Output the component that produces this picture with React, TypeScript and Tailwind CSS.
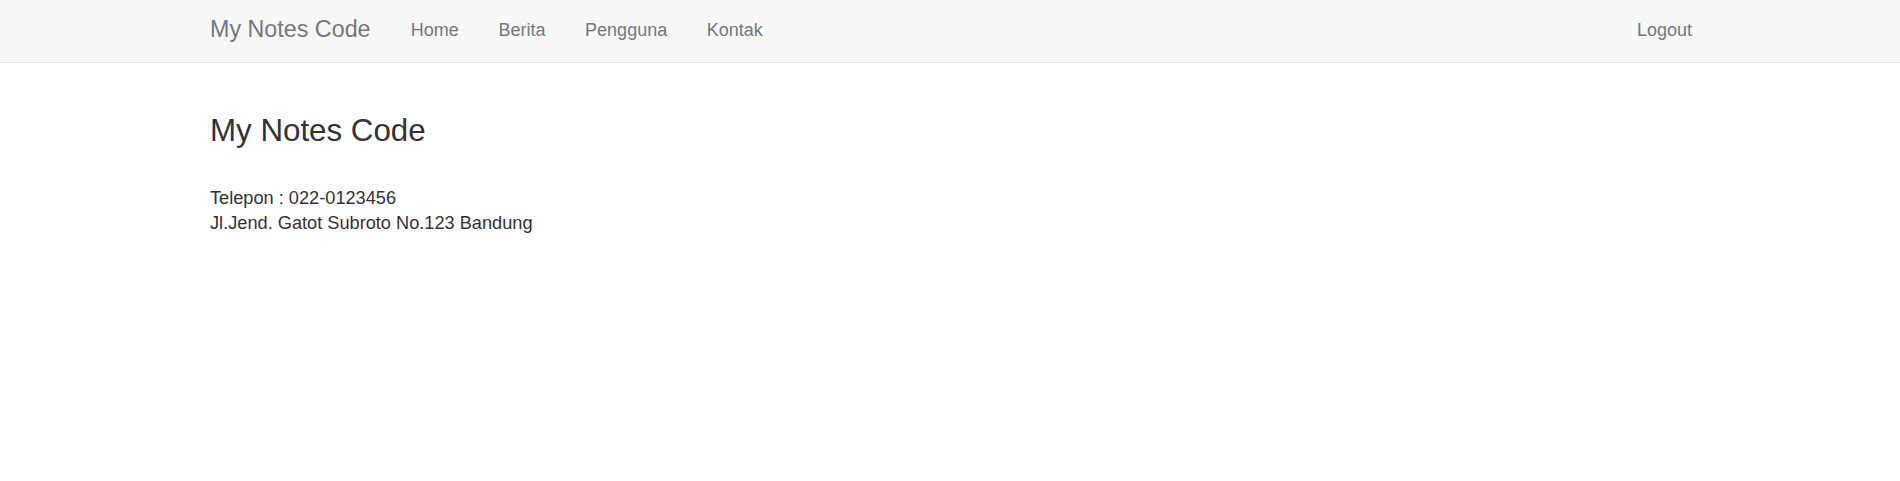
const NAV_LINKS = ["Home", "Berita", "Pengguna", "Kontak"];

export default function App() {
  return (
    <div className="min-h-[481px] bg-white text-[#333] font-['Liberation_Sans',Arial,sans-serif]">
      <header className="h-[63px] border-b border-[#e7e7e7] bg-[#f8f8f8]">
        <nav className="mx-auto flex h-full w-[1484px] items-start justify-between pl-[2px]">
          <div className="flex items-start">
            <a href="#" className="pt-[17px] pr-[20.5px] text-[23.3px] leading-[25px] text-[#777]">
              My Notes Code
            </a>
            <ul className="flex">
              {NAV_LINKS.map((label) => (
                <li key={label}>
                  <a
                    href="#"
                    className="block px-[19.8px] pt-[17.5px] text-[18px] leading-[25px] text-[#777] hover:text-[#333]"
                  >
                    {label}
                  </a>
                </li>
              ))}
            </ul>
          </div>
          <a href="#" className="block pt-[17.5px] text-[18px] leading-[25px] text-[#777] hover:text-[#333]">
            Logout
          </a>
        </nav>
      </header>

      <main className="mx-auto w-[1484px] pl-[2px]">
        <h3 className="mt-[51px] text-[31.3px] font-normal leading-[34px]">My Notes Code</h3>
        <p className="mt-[37.5px] text-[18.2px] leading-[25px]">
          Telepon : 022-0123456
          <br />
          Jl.Jend. Gatot Subroto No.123 Bandung
        </p>
      </main>
    </div>
  );
}
